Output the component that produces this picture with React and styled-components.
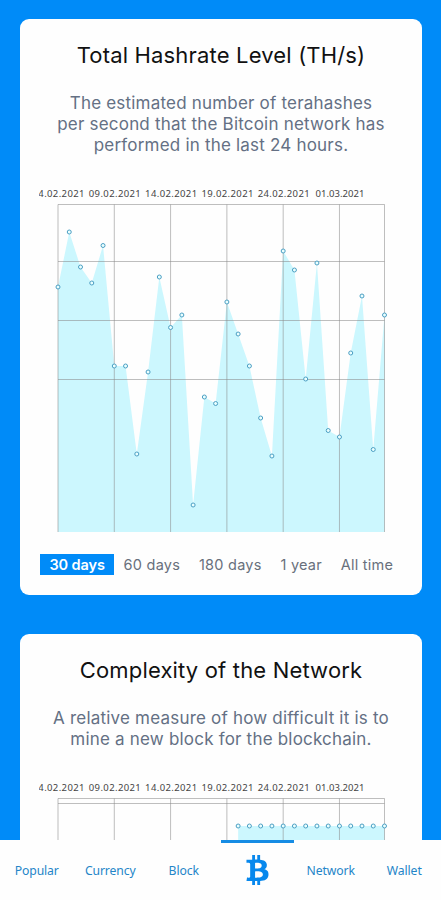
import React, { useState } from "react";
import styled, { createGlobalStyle } from "styled-components";
import { FaBtc } from "react-icons/fa";

const GlobalStyle = createGlobalStyle`
  * {
    box-sizing: border-box;
  }
  body {
    margin: 0;
    background-color: #008bf8;
    font-family: Inter, "Liberation Sans", sans-serif;
  }
`;

const Page = styled.main`
  height: 900px;
  overflow: hidden;
  padding: 19px 19px 0 20px;
  display: flex;
  flex-direction: column;
  gap: 39px;
`;

const Card = styled.section`
  flex: none;
  padding: 20px 19px 20px;
  background-color: #fefefe;
  border-radius: 9px;
  display: flex;
  flex-direction: column;
`;

const Title = styled.h2`
  margin: 0;
  color: #111;
  font-size: 22px;
  font-weight: 400;
  line-height: 32px;
  letter-spacing: 0.17px;
  text-align: center;
  white-space: nowrap;
`;

const Description = styled.p`
  margin: 22px 0 28px;
  color: #647084;
  font-size: 17px;
  font-weight: 400;
  line-height: 21px;
  letter-spacing: 0.2px;
  text-align: center;
  white-space: pre-line;
`;

const Plot = styled.svg`
  display: block;
  width: 364px;
  height: 348px;
  overflow: hidden;
`;

const DateLabel = styled.text`
  fill: #444;
  font-family: "Noto Sans", "Open Sans", sans-serif;
  font-size: 9.5px;
`;

const Ranges = styled.div`
  margin: 22px 0 0 1px;
  display: flex;
`;

const RangeButton = styled.button`
  height: 21px;
  padding: 0 9.4px;
  border: 0;
  color: ${props => (props.$active ? "#fff" : "#68707c")};
  background-color: ${props => (props.$active ? "#008bf8" : "transparent")};
  font-family: inherit;
  font-size: 14.5px;
  font-weight: ${props => (props.$active ? 600 : 400)};
  line-height: 22px;
  letter-spacing: ${props => (props.$active ? "-0.1px" : "0.25px")};
  white-space: nowrap;
`;

const Nav = styled.nav`
  position: fixed;
  left: 0;
  right: 0;
  bottom: 0;
  height: 60px;
  background-color: #fefefe;
  display: grid;
  grid-template-columns: repeat(6, 1fr);
`;

const NavItem = styled.a`
  padding-bottom: 2px;
  display: flex;
  align-items: center;
  justify-content: center;
  border-top: 3px solid ${props => (props.$active ? "#168ce4" : "transparent")};
  color: ${props => (props.$active ? "#0788ed" : "#2485c8")};
  font-family: "Noto Sans", "Open Sans", sans-serif;
  font-size: 12.2px;
  letter-spacing: -0.1px;
`;

const BitcoinIcon = styled(FaBtc)`
  width: 23px;
  height: 30px;
  margin-bottom: 2px;
`;

const LEFT = 19;
const TOP = 20.5;
const WIDTH = 326.5;
const HEIGHT = 327.5;
const STEP = WIDTH / 29;

const dates = [
  "04.02.2021",
  "09.02.2021",
  "14.02.2021",
  "19.02.2021",
  "24.02.2021",
  "01.03.2021"
];

// distance of every day's value from the top of the plot
const hashrate = [
  83, 28, 63, 79, 41.5, 162, 162, 250, 168, 73, 123.5, 111, 301, 193, 199.5,
  98, 130, 162, 214, 252, 47, 66, 175, 59, 226.5, 233, 149, 92, 245.5, 111
];
const complexity = Array(14).fill(28);

const Chart = ({ values, start = 0, lines }) => {
  const points = values.map((value, i) => ({
    x: LEFT + (start + i) * STEP,
    y: TOP + value - 0.5
  }));
  const last = points[points.length - 1];
  const area =
    `M${points[0].x} ${TOP + HEIGHT}` +
    points.map(p => `L${p.x} ${p.y}`).join("") +
    `L${last.x} ${TOP + HEIGHT}Z`;

  return (
    <Plot viewBox="0 0 364 348">
      <path d={area} fill="#ccf7fe" />
      <g stroke="#888" strokeOpacity="0.55">
        {dates.map((date, i) => (
          <line
            key={date}
            x1={LEFT + i * 5 * STEP}
            x2={LEFT + i * 5 * STEP}
            y1={TOP}
            y2={TOP + HEIGHT}
          />
        ))}
        <line x1={LEFT + WIDTH} x2={LEFT + WIDTH} y1={TOP} y2={TOP + HEIGHT} />
        {lines.map(y => (
          <line key={y} x1={LEFT} x2={LEFT + WIDTH} y1={TOP + y} y2={TOP + y} />
        ))}
      </g>
      {points.map(p => (
        <circle
          key={p.x}
          cx={p.x}
          cy={p.y}
          r="2"
          fill="#eaffff"
          stroke="#4b9fc4"
          strokeWidth="1"
        />
      ))}
      {dates.map((date, i) => (
        <DateLabel
          key={date}
          x={LEFT + i * 5 * STEP + 0.5}
          y="13"
          textAnchor="middle"
          textLength={i === 5 ? 49 : 52}
        >
          {date}
        </DateLabel>
      ))}
    </Plot>
  );
};

const ranges = ["30 days", "60 days", "180 days", "1 year", "All time"];

const ChartCard = ({ title, description, ...chart }) => {
  const [range, setRange] = useState(ranges[0]);
  return (
    <Card>
      <Title>{title}</Title>
      <Description>{description}</Description>
      <Chart {...chart} />
      <Ranges>
        {ranges.map(name => (
          <RangeButton
            key={name}
            $active={name === range}
            onClick={() => setRange(name)}
          >
            {name}
          </RangeButton>
        ))}
      </Ranges>
    </Card>
  );
};

const App = () => (
  <>
    <GlobalStyle />
    <Page>
      <ChartCard
        title="Total Hashrate Level (TH/s)"
        description={
          "The estimated number of terahashes\nper second that the Bitcoin network has\nperformed in the last 24 hours."
        }
        values={hashrate}
        lines={[0, 57, 116, 175]}
      />
      <ChartCard
        title="Complexity of the Network"
        description={
          "A relative measure of how difficult it is to\nmine a new block for the blockchain."
        }
        values={complexity}
        start={16}
        lines={[0, 5]}
      />
    </Page>
    <Nav>
      <NavItem>Popular</NavItem>
      <NavItem>Currency</NavItem>
      <NavItem>Block</NavItem>
      <NavItem $active>
        <BitcoinIcon />
      </NavItem>
      <NavItem>Network</NavItem>
      <NavItem>Wallet</NavItem>
    </Nav>
  </>
);

export default App;
